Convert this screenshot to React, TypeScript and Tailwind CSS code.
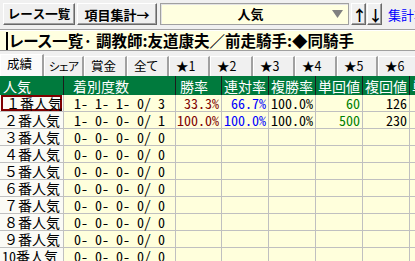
import React from 'react';

const FONT = "font-['Noto_Sans_Mono_CJK_JP','Noto_Sans_CJK_JP',monospace]";
const PROP = "font-['Noto_Sans_CJK_JP',sans-serif] [font-feature-settings:'palt']";

const tabs = [
  { label: '成績', w: 44 },
  { label: 'シェア', w: 40 },
  { label: '賞金', w: 43 },
  { label: '全て', w: 42 },
  { label: '★1', w: 41 },
  { label: '★2', w: 43 },
  { label: '★3', w: 42 },
  { label: '★4', w: 42 },
  { label: '★5', w: 41 },
  { label: '★6', w: 40 },
];

const heads = [
  { label: '人気', w: 'w-[64px] pl-[3px]' },
  { label: '着別度数', w: 'w-[112px] pl-[9px]' },
  { label: '勝率', w: 'w-[46px] pl-[4px]' },
  { label: '連対率', w: 'w-[47px] pl-[2px]' },
  { label: '複勝率', w: 'w-[47px] pl-[2px]' },
  { label: '単回値', w: 'w-[47px] pl-[2px]' },
  { label: '複回値', w: 'w-[47px] pl-[2px]' },
  { label: '単回値', w: 'w-[60px] pl-[2px]' },
];

type Row = {
  name: string;
  counts: string;
  win?: string;
  rentai?: string;
  fuku?: string;
  tan?: string;
  fukuKai?: string;
};

const rows: Row[] = [
  { name: '１番人気', counts: '1- 1- 1- 0/ 3', win: '33.3%', rentai: '66.7%', fuku: '100.0%', tan: '60', fukuKai: '126' },
  { name: '２番人気', counts: '1- 0- 0- 0/ 1', win: '100.0%', rentai: '100.0%', fuku: '100.0%', tan: '500', fukuKai: '230' },
  { name: '３番人気', counts: '0- 0- 0- 0/ 0' },
  { name: '４番人気', counts: '0- 0- 0- 0/ 0' },
  { name: '５番人気', counts: '0- 0- 0- 0/ 0' },
  { name: '６番人気', counts: '0- 0- 0- 0/ 0' },
  { name: '７番人気', counts: '0- 0- 0- 0/ 0' },
  { name: '８番人気', counts: '0- 0- 0- 0/ 0' },
  { name: '９番人気', counts: '0- 0- 0- 0/ 0' },
  { name: '10番人気', counts: '0- 0- 0- 0/ 0' },
];

const raised =
  'border border-t-white border-l-white border-r-[#696969] border-b-[#696969] shadow-[inset_-1px_-1px_0_#a0a0a0]';

const cell = 'shrink-0 h-full flex items-center bg-[#ffffdc] border-r border-[#c0c0c0]';
const num = `${cell} justify-end pr-[2px]`;

export default function App() {
  return (
    <div className={`w-[415px] h-[261px] overflow-hidden bg-[#f0f0f0] text-black ${FONT}`}>
      {/* toolbar */}
      <div className="h-[29px] flex items-start pt-[3px] whitespace-nowrap overflow-hidden">
        <button className={`shrink-0 ml-[3px] w-[72px] h-[22px] bg-[#f0f0f0] text-[12.5px] font-bold leading-none ${raised}`}>
          レース一覧
        </button>
        <button className={`shrink-0 ml-[2px] w-[80px] h-[22px] bg-[#f0f0f0] text-[13px] font-bold leading-none ${raised}`}>
          項目集計→
        </button>
        <div className="shrink-0 ml-[3px] w-[189px] h-[22px] bg-[#ffffe0] border border-[#a0a0a0] shadow-[inset_1px_1px_0_#e3e3e3] flex items-center">
          <span className="flex-1 text-center text-[13px] font-bold pl-[8px]">人気</span>
          <svg width="11" height="8" viewBox="0 0 11 8" className="mr-[5px]">
            <polygon points="0,0 11,0 5.5,8" fill="#808080" />
          </svg>
        </div>
        <button className={`shrink-0 ml-[2px] w-[15px] h-[22px] bg-[#f0f0f0] text-[15px] font-bold leading-none ${raised}`}>
          ↑
        </button>
        <button className={`shrink-0 ml-px w-[15px] h-[22px] bg-[#f0f0f0] text-[15px] font-bold leading-none ${raised}`}>
          ↓
        </button>
        <span className="shrink-0 ml-[6px] mt-[2px] text-[13px] text-[#0000ff]">集計項目</span>
      </div>

      {/* title */}
      <div className="border-t border-t-[#a0a0a0] border-b border-b-[#a0a0a0]">
        <div className="h-[20px] bg-[#ffffe0] border-t border-white flex items-center pl-[6px]">
          <div className={`border-l-2 border-black pl-[1px] h-[18px] flex items-center text-[15.5px] font-bold leading-none whitespace-nowrap ${PROP}`}>
            レース一覧· 調教師:友道康夫／前走騎手:◆同騎手
          </div>
        </div>
      </div>

      {/* tabs */}
      <div className="h-[23px] mt-[2px] flex items-end whitespace-nowrap overflow-hidden">
        {tabs.map((t, i) => (
          <div
            key={t.label}
            style={{ width: t.w }}
            className={`shrink-0 flex items-center leading-none ${PROP} border-t border-t-white border-l border-l-white border-r-2 border-r-[#a0a0a0] ${
              i === 0 ? 'h-[22px] bg-[#fafafa] pb-[2px]' : 'h-[20px] bg-[#f0f0f0]'
            } ${i === 1 ? 'text-[11.5px] tracking-[-0.5px] pl-[4px]' : 'text-[12.5px] pl-[6px]'}`}
          >
            {t.label}
          </div>
        ))}
      </div>

      {/* table */}
      <div className="w-[470px] text-[14px] leading-none whitespace-nowrap">
        <div className="h-[19px] flex bg-[#007a3d] text-white">
          {heads.map((h, i) => (
            <div key={i} className={`shrink-0 h-full flex items-center overflow-hidden border-r border-r-[#1c1c1c] ${h.w}`}>
              {h.label}
            </div>
          ))}
        </div>
        {rows.map((r, i) => (
          <div key={i} className="h-[17px] flex border-b border-[#c0c0c0]">
            <div className="shrink-0 w-[64px] h-full bg-[#fbfbf6] border-r border-[#c0c0c0]">
              <div
                className={`h-full flex items-center ${
                  i === 0 ? 'border-2 border-[#800000] pl-[3px] mx-px' : i === 9 ? 'pl-[2px]' : 'pl-[4px]'
                }`}
              >
                {r.name}
              </div>
            </div>
            <div className={`${cell} w-[112px] pl-[10px]`}>{r.counts}</div>
            <div className={`${num} w-[46px] text-[#800000]`}>{r.win}</div>
            <div className={`${num} w-[47px] text-[#0000ff]`}>{r.rentai}</div>
            <div className={`${num} w-[47px]`}>{r.fuku}</div>
            <div className={`${num} w-[47px] text-[#008000]`}>{r.tan}</div>
            <div className={`${num} w-[47px]`}>{r.fukuKai}</div>
            <div className={`${cell} w-[60px]`}></div>
          </div>
        ))}
      </div>
    </div>
  );
}
